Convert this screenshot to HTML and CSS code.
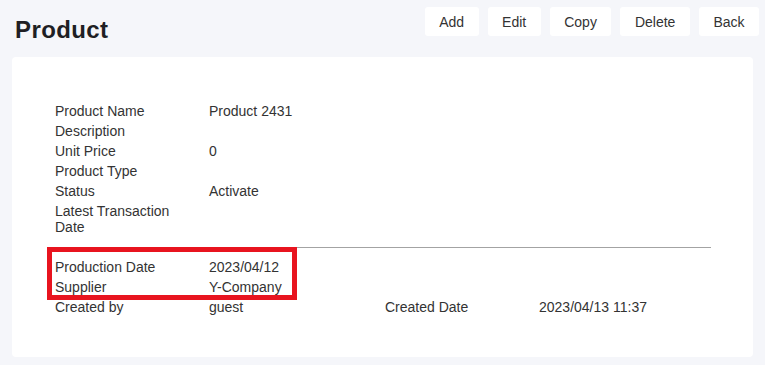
FILE: index.html
```html
<!DOCTYPE html>
<html lang="en">

<head>
    <meta charset="UTF-8">
    <meta name="viewport" content="width=device-width, initial-scale=1.0">
    <title>Product</title>
    <link rel="stylesheet" href="styles.css">
</head>

<body>
    <div class="page-header">
        <h1>Product</h1>
        <div class="actions">
            <button type="button">Add</button>
            <button type="button">Edit</button>
            <button type="button">Copy</button>
            <button type="button">Delete</button>
            <button type="button">Back</button>
        </div>
    </div>

    <div class="card">
        <div class="detail-section">
            <div class="detail-grid">
                <div class="label">Product Name</div>
                <div class="value">Product 2431</div>
                <div></div><div></div>
                <div class="label">Description</div>
                <div class="value"></div>
                <div></div><div></div>
                <div class="label">Unit Price</div>
                <div class="value">0</div>
                <div></div><div></div>
                <div class="label">Product Type</div>
                <div class="value"></div>
                <div></div><div></div>
                <div class="label">Status</div>
                <div class="value">Activate</div>
                <div></div><div></div>
                <div class="label">Latest Transaction Date</div>
                <div class="value"></div>
                <div></div><div></div>
            </div>
        </div>

        <div class="detail-section bordered">
            <div class="detail-grid">
                <div class="label">Production Date</div>
                <div class="value">2023/04/12</div>
                <div></div><div></div>
                <div class="label">Supplier</div>
                <div class="value">Y-Company</div>
                <div></div><div></div>
                <div class="label">Created by</div>
                <div class="value">guest</div>
                <div class="label">Created Date</div>
                <div class="value">2023/04/13 11:37</div>
            </div>
            <!-- highlight annotation -->
            <div class="highlight"></div>
        </div>
    </div>
</body>

</html>
```

FILE: styles.css
```css
body {
    font-family: "Liberation Sans", Arial, sans-serif;
    margin: 0;
    padding: 0;
    background-color: #f5f6fa;
    color: #333;
}

.page-header {
    display: flex;
    justify-content: space-between;
    align-items: flex-start;
    padding: 7px 6px 0 15px;
    height: 50px;
}

.page-header h1 {
    margin: 9px 0 0;
    font-size: 24px;
    line-height: 28px;
    letter-spacing: 0.4px;
    color: #1f1f24;
}

.actions {
    display: flex;
    gap: 9px;
}

.actions button {
    height: 29px;
    padding: 0 14.5px;
    font-family: "Liberation Sans", Arial, sans-serif;
    font-size: 14px;
    color: #333;
    background: white;
    border: none;
    border-radius: 3px;
    cursor: pointer;
}

.card {
    margin: 0 12px 8px;
    padding: 46px 42px 42px 35px;
    background: white;
    border-radius: 4px;
}

.detail-section {
    padding: 0 8px;
}

.detail-section.bordered {
    position: relative;
    margin-top: 12px;
    padding-top: 11px;
    border-top: 1px solid #a3a3a3;
}

.detail-grid {
    display: grid;
    grid-template-columns: 154px 176px 154px 1fr;
    row-gap: 4px;
    font-size: 14px;
    line-height: 16px;
}

.label {
    padding-right: 20px;
}

.highlight {
    position: absolute;
    top: -1px;
    left: 0;
    width: 240px;
    height: 43px;
    border: 5px solid #e8141f;
}
```
